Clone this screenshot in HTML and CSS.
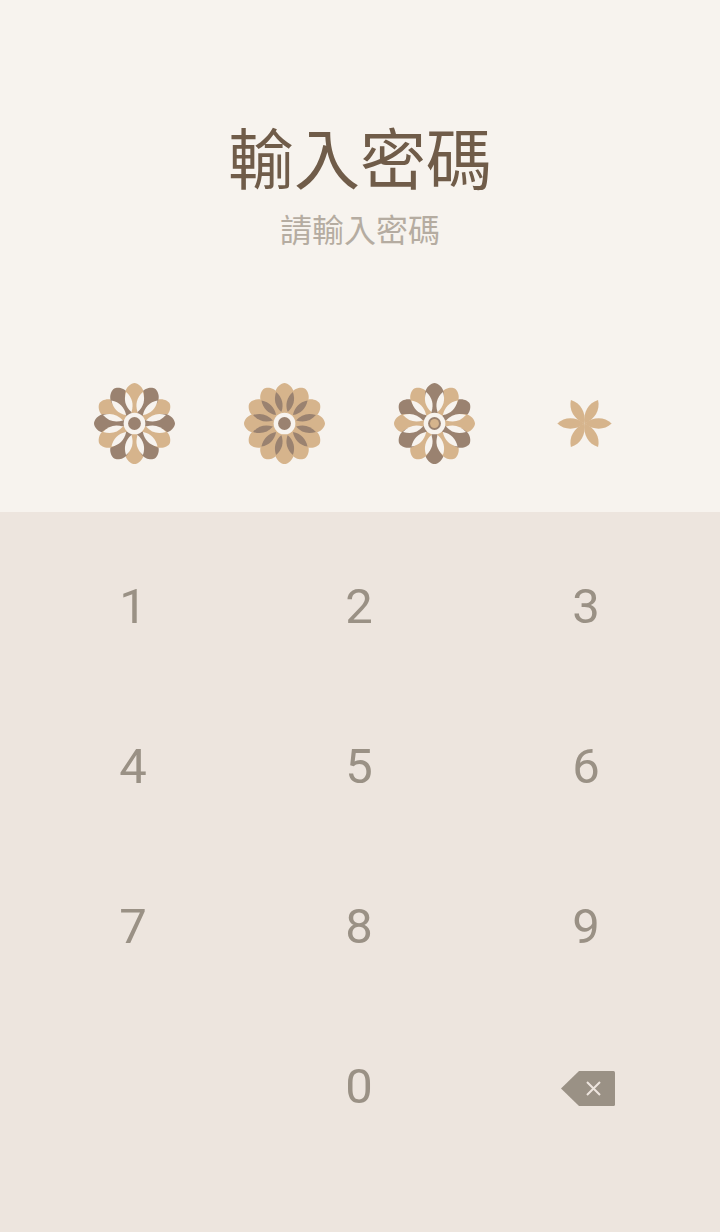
FILE: index.html
```html
<!DOCTYPE html>
<html>
    <head>
        <meta charset="utf-8">
        <title>輸入密碼</title>
        <link rel="stylesheet" href="styles.css">
    </head>
    <body>
        <svg class="defs" width="0" height="0">
            <defs>
                <path id="petal" d="M0,-41 C3,-41 9.5,-37 9.5,-29.5 C9.5,-22 3.2,-18 3,-10 L-3,-10 C-3.2,-18 -9.5,-22 -9.5,-29.5 C-9.5,-37 -3,-41 0,-41Z"/>
                <path id="lens" d="M0,-33 C4.6,-26 4.6,-19 0,-12 C-4.6,-19 -4.6,-26 0,-33Z"/>
                <path id="leaf" d="M0,-27.5 C7,-20 7,-9 0,0 C-7,-9 -7,-20 0,-27.5Z"/>
                <g id="threePetals">
                    <use href="#petal"/>
                    <use href="#petal" transform="rotate(120)"/>
                    <use href="#petal" transform="rotate(240)"/>
                </g>
                <g id="sixLenses">
                    <use href="#lens" transform="rotate(15)"/>
                    <use href="#lens" transform="rotate(75)"/>
                    <use href="#lens" transform="rotate(135)"/>
                    <use href="#lens" transform="rotate(195)"/>
                    <use href="#lens" transform="rotate(255)"/>
                    <use href="#lens" transform="rotate(315)"/>
                </g>
                <g id="twelveLenses">
                    <use href="#sixLenses"/>
                    <use href="#sixLenses" transform="rotate(30)"/>
                </g>
            </defs>
        </svg>

        <div class="top">
            <h1 class="title">輸入密碼</h1>
            <p class="subtitle">請輸入密碼</p>

            <div class="dots">
                <div class="dot">
                    <svg class="flower" viewBox="-41 -41 82 82">
                        <use href="#threePetals" class="tan" transform="rotate(60)"/>
                        <use href="#threePetals" class="brown" transform="rotate(30)"/>
                        <use href="#threePetals" class="brown" transform="rotate(90)"/>
                        <use href="#threePetals" class="tan"/>
                        <use href="#twelveLenses" class="paper"/>
                        <circle r="11" class="paper"/>
                        <circle r="6.5" class="brown"/>
                    </svg>
                </div>
                <div class="dot">
                    <svg class="flower" viewBox="-41 -41 82 82">
                        <use href="#threePetals" class="tan"/>
                        <use href="#threePetals" class="tan" transform="rotate(30)"/>
                        <use href="#threePetals" class="tan" transform="rotate(60)"/>
                        <use href="#threePetals" class="tan" transform="rotate(90)"/>
                        <use href="#twelveLenses" class="brown"/>
                        <circle r="11" class="paper"/>
                        <circle r="6.5" class="brown"/>
                    </svg>
                </div>
                <div class="dot">
                    <svg class="flower" viewBox="-41 -41 82 82">
                        <use href="#threePetals" class="brown" transform="rotate(60)"/>
                        <use href="#threePetals" class="tan" transform="rotate(30)"/>
                        <use href="#threePetals" class="tan" transform="rotate(90)"/>
                        <use href="#threePetals" class="brown"/>
                        <use href="#twelveLenses" class="paper"/>
                        <circle r="11" class="paper"/>
                        <circle r="6.5" class="brown"/>
                        <circle r="4.5" class="tan"/>
                    </svg>
                </div>
                <div class="dot">
                    <svg class="flower" viewBox="-41 -41 82 82">
                        <use href="#leaf" class="tan" transform="rotate(30)"/>
                        <use href="#leaf" class="tan" transform="rotate(90)"/>
                        <use href="#leaf" class="tan" transform="rotate(150)"/>
                        <use href="#leaf" class="tan" transform="rotate(210)"/>
                        <use href="#leaf" class="tan" transform="rotate(270)"/>
                        <use href="#leaf" class="tan" transform="rotate(330)"/>
                    </svg>
                </div>
            </div>
        </div>

        <div class="keypad">
            <div class="key">1</div>
            <div class="key">2</div>
            <div class="key">3</div>
            <div class="key">4</div>
            <div class="key">5</div>
            <div class="key">6</div>
            <div class="key">7</div>
            <div class="key">8</div>
            <div class="key">9</div>
            <div class="key"></div>
            <div class="key">0</div>
            <div class="key">
                <svg class="backspace" viewBox="0 0 54 35">
                    <path class="backspaceShape" d="M18,0 L52.5,0 Q54,0 54,1.5 L54,33.5 Q54,35 52.5,35 L18,35 L0,17.5Z"/>
                    <path class="backspaceCross" d="M26,11 L39,24 M39,11 L26,24"/>
                </svg>
            </div>
        </div>
    </body>
</html>
```

FILE: styles.css
```css
html, body {
    margin: 0;
    padding: 0;
}

body {
    width: 720px;
    height: 1232px;
    overflow: hidden;
    background: #ede5de;
    font-family: Roboto, "Noto Sans CJK TC", sans-serif;
}

.defs {
    display: block;
    height: 0;
}

.top {
    height: 512px;
    box-sizing: border-box;
    padding-top: 116px;
    background: #f7f3ee;
    text-align: center;
}

.title {
    margin: 0;
    font-family: "Noto Sans CJK TC", sans-serif;
    font-size: 66px;
    font-weight: 400;
    line-height: 78px;
    color: #705c49;
}

.subtitle {
    margin: 0;
    margin-top: 11px;
    font-family: "Noto Sans CJK TC", sans-serif;
    font-size: 32px;
    line-height: 46px;
    color: #b5aca1;
}

.dots {
    display: flex;
    margin-top: 132px;
    padding-left: 60px;
}

.dot {
    display: flex;
    justify-content: center;
    width: 149px;
    margin-right: 1px;
}

.flower {
    display: block;
    width: 81px;
    height: 81px;
}

.tan {
    fill: #d6b48c;
}

.brown {
    fill: #9a8270;
}

.paper {
    fill: #f7f3ee;
}

.keypad {
    display: grid;
    grid-template-columns: 226px 226px 228px;
    grid-auto-rows: 160px;
    padding: 14px 0 0 20px;
}

.key {
    display: flex;
    justify-content: center;
    align-items: center;
    font-size: 49px;
    color: #9a9185;
}

.backspace {
    display: block;
    width: 54px;
    height: 35px;
    margin-left: 3px;
    margin-top: 4px;
}

.backspaceShape {
    fill: #9a9185;
}

.backspaceCross {
    fill: none;
    stroke: #ede5de;
    stroke-width: 2;
}
```
